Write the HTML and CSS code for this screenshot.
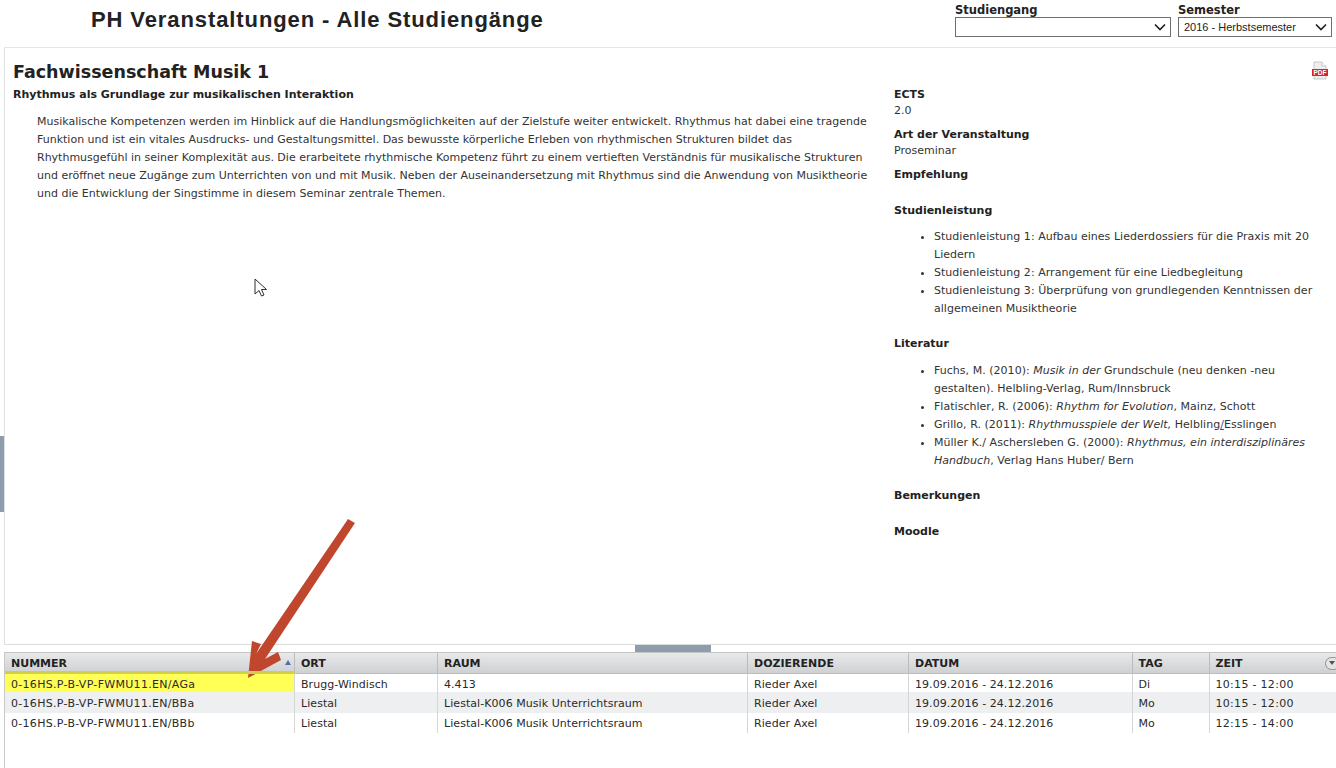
FILE: index.html
```html
<!DOCTYPE html>
<html lang="de">
<head>
    <meta charset="UTF-8">
    <title>PH Veranstaltungen - Alle Studiengänge</title>
    <link rel="stylesheet" href="styles.css">
</head>
<body>
<div class="header">
    <h1>PH Veranstaltungen - Alle Studiengänge</h1>
    <div class="filters">
        <div class="filter filter-study">
            <label>Studiengang</label>
            <div class="select"><span></span><svg width="12" height="8" viewBox="0 0 12 8"><path d="M1 1.5l5 5 5-5" fill="none" stroke="#222" stroke-width="1.7"/></svg></div>
        </div>
        <div class="filter filter-semester">
            <label>Semester</label>
            <div class="select"><span>2016 - Herbstsemester</span><svg width="12" height="8" viewBox="0 0 12 8"><path d="M1 1.5l5 5 5-5" fill="none" stroke="#222" stroke-width="1.7"/></svg></div>
        </div>
    </div>
</div>

<div class="detail">
    <div class="detail-left">
        <h2>Fachwissenschaft Musik 1</h2>
        <h3>Rhythmus als Grundlage zur musikalischen Interaktion</h3>
        <p class="description">Musikalische Kompetenzen werden im Hinblick auf die Handlungsmöglichkeiten auf der Zielstufe weiter entwickelt. Rhythmus hat dabei eine tragende Funktion und ist ein vitales Ausdrucks- und Gestaltungsmittel. Das bewusste körperliche Erleben von rhythmischen Strukturen bildet das Rhythmusgefühl in seiner Komplexität aus. Die erarbeitete rhythmische Kompetenz führt zu einem vertieften Verständnis für musikalische Strukturen und eröffnet neue Zugänge zum Unterrichten von und mit Musik. Neben der Auseinandersetzung mit Rhythmus sind die Anwendung von Musiktheorie und die Entwicklung der Singstimme in diesem Seminar zentrale Themen.</p>
    </div>
    <div class="detail-right">
        <svg class="pdf-icon" width="18" height="20" viewBox="0 0 18 20">
            <path d="M3 1h8l4 4v13H3z" fill="#eee" stroke="#c8c8c8"/>
            <path d="M11 1v4h4" fill="#fff" stroke="#c8c8c8"/>
            <rect x="1" y="8" width="16" height="7" fill="#d9232a"/>
            <text x="9" y="14" text-anchor="middle" class="pdf-text">PDF</text>
        </svg>
        <h4>ECTS</h4>
        <div class="value">2.0</div>
        <h4>Art der Veranstaltung</h4>
        <div class="value">Proseminar</div>
        <h4>Empfehlung</h4>
        <h4 class="section">Studienleistung</h4>
        <ul>
            <li>Studienleistung 1: Aufbau eines Liederdossiers für die Praxis mit 20 Liedern</li>
            <li>Studienleistung 2: Arrangement für eine Liedbegleitung</li>
            <li>Studienleistung 3: Überprüfung von grundlegenden Kenntnissen der allgemeinen Musiktheorie</li>
        </ul>
        <h4 class="section">Literatur</h4>
        <ul class="literature">
            <li>Fuchs, M. (2010): <em>Musik in der</em> Grundschule (neu denken -neu gestalten). Helbling-Verlag, Rum/Innsbruck</li>
            <li>Flatischler, R. (2006): <em>Rhythm for Evolution</em>, Mainz, Schott</li>
            <li>Grillo, R. (2011): <em>Rhythmusspiele der Welt,</em> Helbling<a href="#">/</a>Esslingen</li>
            <li>Müller K./ Aschersleben G. (2000): <em>Rhythmus, ein interdisziplinäres Handbuch</em>, Verlag Hans Huber/ Bern</li>
        </ul>
        <h4 class="section">Bemerkungen</h4>
        <h4 class="section">Moodle</h4>
    </div>
</div>

<div class="grid-panel">
    <table>
        <thead>
            <tr>
                <th class="col-nummer">NUMMER<span class="sort"></span></th>
                <th class="col-ort">ORT</th>
                <th class="col-raum">RAUM</th>
                <th class="col-doz">DOZIERENDE</th>
                <th class="col-datum">DATUM</th>
                <th class="col-tag">TAG</th>
                <th>ZEIT<span class="menu-btn"></span></th>
            </tr>
        </thead>
        <tbody>
            <tr class="first">
                <td class="marked">0-16HS.P-B-VP-FWMU11.EN/AGa</td>
                <td>Brugg-Windisch</td>
                <td>4.413</td>
                <td>Rieder Axel</td>
                <td>19.09.2016 - 24.12.2016</td>
                <td>Di</td>
                <td>10:15 - 12:00</td>
            </tr>
            <tr class="alt">
                <td>0-16HS.P-B-VP-FWMU11.EN/BBa</td>
                <td>Liestal</td>
                <td>Liestal-K006 Musik Unterrichtsraum</td>
                <td>Rieder Axel</td>
                <td>19.09.2016 - 24.12.2016</td>
                <td>Mo</td>
                <td>10:15 - 12:00</td>
            </tr>
            <tr class="last">
                <td>0-16HS.P-B-VP-FWMU11.EN/BBb</td>
                <td>Liestal</td>
                <td>Liestal-K006 Musik Unterrichtsraum</td>
                <td>Rieder Axel</td>
                <td>19.09.2016 - 24.12.2016</td>
                <td>Mo</td>
                <td>12:15 - 14:00</td>
            </tr>
        </tbody>
    </table>
</div>

<div class="side-tab"></div>
<div class="split-handle"></div>

<svg class="cursor" width="14" height="20" viewBox="0 0 14 20">
    <path d="M1 1v15l4-3.500 2.500 5.500 2.500-1-2.500-5.500h5z" fill="#fff" stroke="#2a2f3a" stroke-width="1"/>
</svg>

<svg class="arrow" width="112" height="166" viewBox="0 0 112 166">
    <path d="M3 161L7 124L16 127L11 137L103 2L110 6L20 142L33 135L36 143z" fill="#c0462e"/>
</svg>
</body>
</html>
```

FILE: styles.css
```css
html, body {
    height: 100%;
}
body {
    margin: 0;
    background-color: #fff;
    color: #222;
    font-family: "DejaVu Sans", Verdana, sans-serif;
    font-size: 11px;
    overflow: hidden;
    position: relative;
    height: 768px;
}

/* header */
.header {
    display: flex;
    justify-content: space-between;
    height: 47px;
    padding: 0 4px 0 91px;
}
.header h1 {
    margin: 7px 0 0;
    font-family: "Liberation Sans", Arial, sans-serif;
    font-size: 22px;
    line-height: 26px;
    letter-spacing: 0.9px;
}
.filters {
    display: flex;
    gap: 7px;
    padding-top: 3px;
}
.filter label {
    display: block;
    font-weight: bold;
    font-size: 11.500px;
    line-height: 14px;
}
.filter-study {
    width: 216px;
}
.filter-semester {
    width: 154px;
}
.select {
    display: flex;
    align-items: center;
    justify-content: space-between;
    box-sizing: border-box;
    height: 20px;
    padding: 0 4px 0 5px;
    border: 1px solid #6f6f6f;
    font-family: "Liberation Sans", Arial, sans-serif;
    font-size: 11px;
}

/* detail */
.detail {
    display: flex;
    box-sizing: border-box;
    height: 598px;
    margin-left: 4px;
    border-top: 1px solid #e6e6e6;
    border-left: 1px solid #e0e0e0;
    border-bottom: 1px solid #dcdcdc;
}
.detail-left {
    width: 860px;
    padding-left: 8px;
}
.detail-left h2 {
    margin: 14px 0 0;
    font-size: 17.500px;
    line-height: 20px;
}
.detail-left h3 {
    margin: 6px 0 0;
    font-size: 11px;
    line-height: 14px;
}
.description {
    margin: 11px 0 0 24px;
    width: 836px;
    line-height: 18px;
    color: #333;
}
.detail-right {
    position: relative;
    flex: 1;
    padding: 39px 18px 0 21px;
}
.pdf-icon {
    position: absolute;
    top: 13px;
    right: 7px;
}
.pdf-text {
    fill: #fff;
    font-family: "Liberation Sans", Arial, sans-serif;
    font-size: 6.500px;
    font-weight: bold;
}
.detail-right h4 {
    margin: 0;
    font-size: 11px;
    line-height: 16px;
}
.value {
    line-height: 16px;
    margin-bottom: 8px;
    color: #333;
}
.detail-right h4.section {
    margin-top: 20px;
}
.detail-right ul {
    margin: 9px 0 -2px;
    padding-left: 40px;
    line-height: 18px;
    letter-spacing: 0.03px;
    color: #333;
}
.detail-right ul.literature {
    margin-top: 10px;
}
.detail-right a {
    color: #1f4fb0;
}

/* table */
.grid-panel {
    box-sizing: border-box;
    height: 116px;
    margin: 7px 0 0 4px;
    border-left: 1px solid #c8c8c8;
    border-top: 1px solid #c4c4c4;
}
table {
    width: 100%;
    border-collapse: collapse;
    table-layout: fixed;
}
th {
    position: relative;
    box-sizing: border-box;
    height: 20px;
    padding: 1px 6px 0;
    text-align: left;
    font-size: 11px;
    background: linear-gradient(#e8e9ea, #cfd0d2);
    border-right: 1px solid #bcbcbc;
    border-bottom: 1px solid #bdbdbd;
}
th:last-child {
    border-right: none;
}
td {
    position: relative;
    height: 19px;
    padding: 1px 6px 0;
    box-sizing: border-box;
    white-space: nowrap;
    letter-spacing: 0.06px;
    border-right: 1px solid #d6d6d6;
    color: #2a2a2a;
}
td:first-child {
    letter-spacing: 0.3px;
}
td:last-child {
    border-right: none;
    letter-spacing: 0.3px;
}
.col-nummer { width: 289.500px; }
.col-ort { width: 143px; }
.col-raum { width: 310px; }
.col-doz { width: 161px; }
.col-datum { width: 223.500px; }
.col-tag { width: 77px; }
tr.first td {
    padding-top: 3px;
}
tr.alt td {
    height: 21px;
    background-color: #eeeff0;
}
tr.last td {
    height: 20px;
}
td.marked {
    background-color: #ffff55;
}
td.marked::before {
    content: "";
    position: absolute;
    z-index: 1;
    left: 0;
    right: -1px;
    top: -3px;
    height: 3px;
    background-color: #cfcf4c;
}
.sort {
    position: absolute;
    right: 3px;
    top: 7px;
    border-left: 3px solid transparent;
    border-right: 3px solid transparent;
    border-bottom: 5px solid #4f6fa5;
}
.menu-btn {
    position: absolute;
    right: -4px;
    top: 4px;
    box-sizing: border-box;
    width: 15px;
    height: 13px;
    border: 1px solid #8f8f8f;
    border-radius: 7px;
    background-color: #e4e4e4;
}
.menu-btn::after {
    content: "";
    position: absolute;
    left: 3px;
    top: 3px;
    border-left: 3px solid transparent;
    border-right: 3px solid transparent;
    border-top: 4px solid #555;
}

/* things lying over the page */
.side-tab {
    position: absolute;
    left: 0;
    top: 436px;
    width: 4px;
    height: 76px;
    background-color: #8d9dab;
}
.split-handle {
    position: absolute;
    left: 635px;
    top: 645px;
    width: 76px;
    height: 7px;
    background-color: #8d9dab;
}
.cursor {
    position: absolute;
    left: 254px;
    top: 278px;
}
.arrow {
    position: absolute;
    left: 245px;
    top: 517px;
}
```
